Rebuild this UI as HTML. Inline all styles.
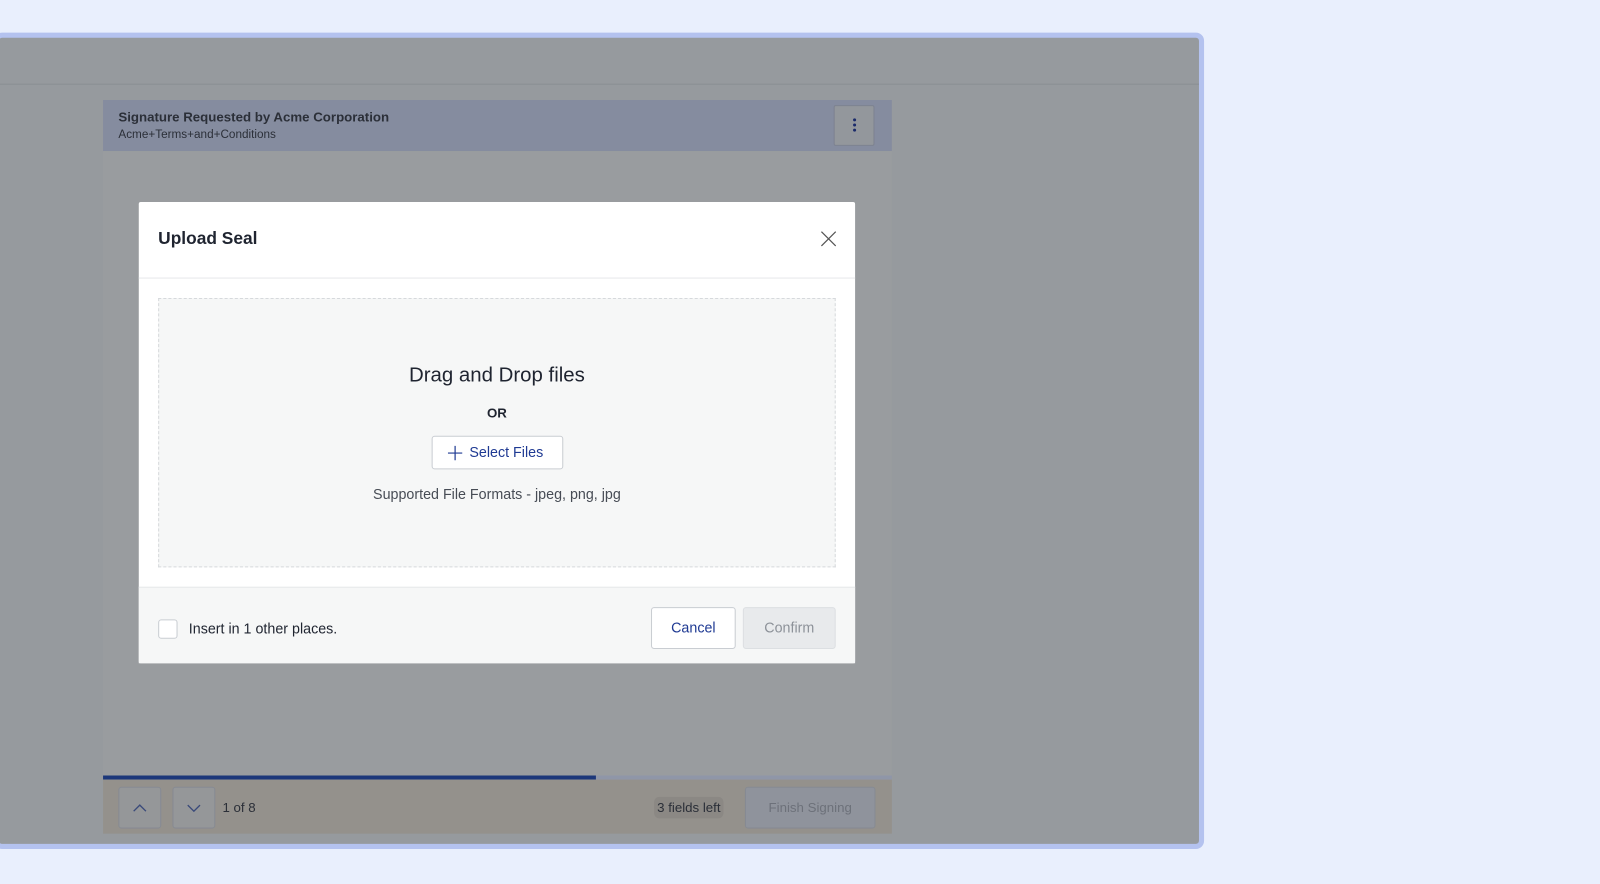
<!DOCTYPE html>
<html><head><style>
*{box-sizing:border-box;margin:0;padding:0}
body{width:1600px;height:883px;background:#e9effd;font-family:"Liberation Sans",sans-serif;position:relative;overflow:hidden}
#wrap{position:absolute;left:0;top:0;width:1568px;height:866px;transform:scale(1.0204);transform-origin:0 0}
.frame{position:absolute;left:-6px;top:32px;width:1186px;height:800px;border:5px solid #b4c2ef;border-radius:8px;background:#969a9e;overflow:hidden}
.topline{position:absolute;left:0;right:0;top:45px;height:1px;background:#8a8e92}
.abs{position:absolute}
</style></head><body><div id="wrap">
<div class="frame">
 <div class="topline"></div>
 <div class="abs" style="left:102px;top:61px;width:773px;height:680px;background:#999c9f"></div>
 <div class="abs" style="left:102px;top:61px;width:773px;height:50px;background:#858c9f"></div>
 <div class="abs" style="left:117px;top:70px;font-size:13px;font-weight:bold;color:#2b2f38">Signature Requested by Acme Corporation</div>
 <div class="abs" style="left:117px;top:89px;font-size:11.5px;color:#2b2f38">Acme+Terms+and+Conditions</div>
 <div class="abs" style="left:818px;top:66px;width:40px;height:40px;background:#93979c;border:1px solid #7d8290;border-radius:2px">
  <div class="abs" style="left:18px;top:12px;width:3px;height:3px;border-radius:50%;background:#1a2a6a;box-shadow:0 5px 0 #1a2a6a,0 10px 0 #1a2a6a"></div></div>
 <div class="abs" style="left:102px;top:723px;width:773px;height:4px;background:#8f96a8"></div>
 <div class="abs" style="left:102px;top:723px;width:483px;height:4px;background:#1c377a"></div>
 <div class="abs" style="left:102px;top:727px;width:773px;height:53px;background:#94918c"></div>
 <div class="abs" style="left:117px;top:734px;width:42px;height:41px;border:1px solid #868a92;border-radius:3px;background:#959799"><svg width="40" height="40"><path d="M14 23l6-6 6 6" stroke="#3a4a7a" fill="none" stroke-width="1.3"/></svg></div>
 <div class="abs" style="left:170px;top:734px;width:42px;height:41px;border:1px solid #868a92;border-radius:3px;background:#959799"><svg width="40" height="40"><path d="M14 17l6 6 6-6" stroke="#3a4a7a" fill="none" stroke-width="1.3"/></svg></div>
 <div class="abs" style="left:219px;top:747px;font-size:13px;color:#2b2f38">1 of 8</div>
 <div class="abs" style="left:642px;top:744px;padding:3px 3px;border-radius:5px;background:#8b8884;font-size:13px;color:#2b2f38">3 fields left</div>
 <div class="abs" style="left:731px;top:734px;width:128px;height:41px;border:1px solid #868a92;border-radius:3px;background:#8f939c;color:#6d717a;font-size:13px;text-align:center;line-height:39px">Finish Signing</div>
</div>
<div class="abs" style="left:136px;top:198px;width:702px;height:452px;background:#fff;border-radius:2px">
 <div class="abs" style="left:19px;top:26px;font-size:17px;font-weight:bold;color:#1f2430">Upload Seal</div>
 <svg class="abs" style="left:668px;top:28px" width="16" height="16"><path d="M1 1L15 15M15 1L1 15" stroke="#555" stroke-width="1.2"/></svg>
 <div class="abs" style="left:0;right:0;top:74px;height:1px;background:#e6e8ea"></div>
 <div class="abs" style="left:19px;top:94px;width:664px;height:264px;background:#f6f7f7;border:1px dashed #d6d9dc"></div>
 <div class="abs" style="left:0;width:702px;top:159px;text-align:center;font-size:20px;color:#1f2430">Drag and Drop files</div>
 <div class="abs" style="left:0;width:702px;top:199px;text-align:center;font-size:13px;font-weight:bold;color:#1f2430">OR</div>
 <div class="abs" style="left:287px;top:229px;width:129px;height:33px;border:1px solid #c9cdd2;border-radius:3px;background:#fff;color:#1f3a93;font-size:14px;line-height:31px;padding-left:36px">Select Files
  <svg class="abs" style="left:14px;top:8px" width="16" height="16"><path d="M8 1v14M1 8h14" stroke="#1f3a93" stroke-width="1.2"/></svg></div>
 <div class="abs" style="left:0;width:702px;top:278px;text-align:center;font-size:14px;color:#474c55">Supported File Formats - jpeg, png, jpg</div>
 <div class="abs" style="left:0;right:0;top:377px;bottom:0;background:#f6f7f7;border-top:1px solid #e6e8ea"></div>
 <div class="abs" style="left:19px;top:409px;width:19px;height:19px;border:1px solid #c9cdd2;border-radius:3px;background:#fff"></div>
 <div class="abs" style="left:49px;top:410px;font-size:14px;color:#1f2430">Insert in 1 other places.</div>
 <div class="abs" style="left:502px;top:397px;width:83px;height:41px;border:1px solid #c9cdd2;border-radius:3px;background:#fff;color:#1f3a93;font-size:14px;text-align:center;line-height:39px">Cancel</div>
 <div class="abs" style="left:592px;top:397px;width:91px;height:41px;border:1px solid #dcdfe2;border-radius:3px;background:#e8eaec;color:#8d9299;font-size:14px;text-align:center;line-height:39px">Confirm</div>
</div>
</div></body></html>
